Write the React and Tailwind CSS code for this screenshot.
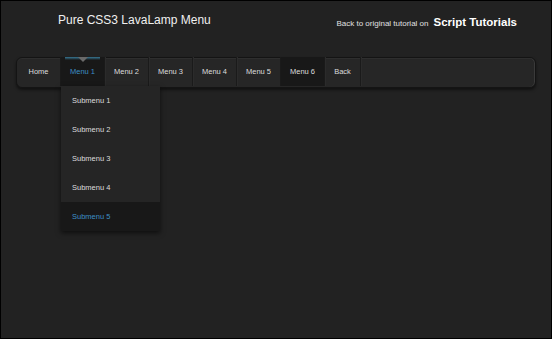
import React from "react";

const items = ["Home", "Menu 1", "Menu 2", "Menu 3", "Menu 4", "Menu 5", "Menu 6", "Back"];
const subItems = ["Submenu 1", "Submenu 2", "Submenu 3", "Submenu 4", "Submenu 5"];

function NavItem({ label }) {
  const isOpen = label === "Menu 1";
  const isDark = label === "Menu 1" || label === "Menu 6";
  const width = label === "Back" ? "w-[36px]" : "w-[44px]";

  return (
    <div
      className={`relative ${width} h-[29px] -mt-px flex items-center justify-center border-r border-[#1a1a1a] shadow-[1px_0_0_#2b2b2b] ${
        isDark ? "bg-[#181818]" : ""
      }`}
    >
      {isOpen && (
        <>
          {/* lava lamp glow + arrow */}
          <div className="absolute top-0 left-[4px] right-[4px] h-[3px] bg-gradient-to-b from-[#3f8fb3] to-transparent opacity-80" />
          <svg className="absolute top-0 left-1/2 -translate-x-1/2" width="10" height="5" viewBox="0 0 10 5">
            <polygon points="0,0 10,0 5,5" fill="#6a6a6a" />
          </svg>
        </>
      )}
      <span className={`text-[7.5px] leading-none ${isOpen ? "text-[#3d8ec4]" : "text-[#dcdcdc]"}`}>{label}</span>

      {isOpen && (
        <div className="absolute left-0 top-[29px] w-[99px] z-10 bg-[#252525] shadow-[0_2px_5px_rgba(0,0,0,0.6)]">
          {subItems.map((s, i) => (
            <div
              key={s}
              className={`h-[29px] flex items-center pl-[11px] text-[7.5px] leading-none ${
                i === 4 ? "bg-[#181818] text-[#3d8ec4]" : "text-[#dcdcdc]"
              }`}
            >
              {s}
            </div>
          ))}
        </div>
      )}
    </div>
  );
}

export default function App() {
  return (
    <div
      className="w-[552px] h-[339px] bg-[#222222] border border-black overflow-hidden"
      style={{ fontFamily: '"Liberation Sans", Arial, sans-serif' }}
    >
      {/* Header */}
      <div className="flex items-start justify-between pl-[57px] pr-[34px] pt-[12px]">
        <h1 className="text-[12px] leading-[14px] text-[#f0f0f0]">Pure CSS3 LavaLamp Menu</h1>
        <div className="flex items-baseline gap-[5px] pt-[1px]">
          <span className="text-[8px] text-[#e0e0e0]">Back to original tutorial on</span>
          <span className="text-[11.5px] font-bold text-white">Script Tutorials</span>
        </div>
      </div>

      {/* Nav bar */}
      <div className="mx-[15px] mt-[26px] h-[31px] rounded-[6px] border border-[#141414] bg-[#262626] shadow-[inset_-1px_0_0_#3a3a3a,inset_0_1px_0_#2e2e2e,0_2px_3px_rgba(0,0,0,0.5)] flex">
        {items.map((label) => (
          <NavItem key={label} label={label} />
        ))}
      </div>
    </div>
  );
}
